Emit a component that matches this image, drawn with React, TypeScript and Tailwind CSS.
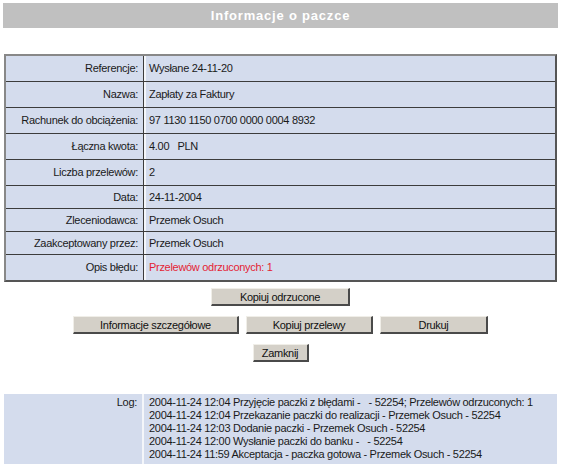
import React from "react";

const rows: { label: string; value: React.ReactNode; h: string }[] = [
  { label: "Referencje:", value: "Wysłane 24-11-20", h: "h-[26px]" },
  { label: "Nazwa:", value: "Zapłaty za Faktury", h: "h-[26px]" },
  { label: "Rachunek do obciążenia:", value: "97 1130 1150 0700 0000 0004 8932", h: "h-[26px]" },
  { label: "Łączna kwota:", value: <span className="whitespace-pre">4.00   PLN</span>, h: "h-[26px]" },
  { label: "Liczba przelewów:", value: "2", h: "h-[26px]" },
  { label: "Data:", value: "24-11-2004", h: "h-[23px]" },
  { label: "Zleceniodawca:", value: "Przemek Osuch", h: "h-[23px]" },
  { label: "Zaakceptowany przez:", value: "Przemek Osuch", h: "h-[23px]" },
  {
    label: "Opis błędu:",
    value: <span className="text-[#e41e34]">Przelewów odrzuconych: 1</span>,
    h: "h-[25px]",
  },
];

const logs = [
  "2004-11-24 12:04 Przyjęcie paczki z błędami -   - 52254; Przelewów odrzuconych: 1",
  "2004-11-24 12:04 Przekazanie paczki do realizacji - Przemek Osuch - 52254",
  "2004-11-24 12:03 Dodanie paczki - Przemek Osuch - 52254",
  "2004-11-24 12:00 Wysłanie paczki do banku -   - 52254",
  "2004-11-24 11:59 Akceptacja - paczka gotowa - Przemek Osuch - 52254",
];

function Btn({ children, w }: { children: React.ReactNode; w: string }) {
  return (
    <button
      className={`${w} h-[18px] bg-[#d4d0c8] border border-t-[#f0eee8] border-l-[#f0eee8] border-r-[#4a4a4a] border-b-[#4a4a4a] border-r-2 border-b-2 text-[11px] tracking-[-0.3px] leading-[14px] text-[#111] flex items-center justify-center`}
    >
      {children}
    </button>
  );
}

export default function App() {
  return (
    <div
      className="w-[565px] h-[469px] bg-white text-[11px] text-[#1a1a1a] pt-[3px]"
      style={{ fontFamily: '"Liberation Sans", Arial, sans-serif' }}
    >
      <div className="ml-[3px] w-[555px] h-[25px] bg-[#c0c0c0] flex items-center justify-center">
        <span className="text-white font-bold text-[13px] tracking-[0.8px]">Informacje o paczce</span>
      </div>

      <div className="ml-[4px] mt-[26px] w-[553px] border-2 border-t-[#888] border-l-[#888] border-r-[#555] border-b-[#555] bg-[#d4dced] tracking-[-0.3px]">
        {rows.map((r, i) => (
          <div
            key={i}
            className={`flex ${r.h} ${i < rows.length - 1 ? "border-b border-[#3c3c3c]" : ""}`}
          >
            <div className="w-[138px] flex items-center justify-end pr-[5px] border-r border-[#3c3c3c]">
              {r.label}
            </div>
            <div className="w-[2px] bg-[#f4f6fa]" />
            <div className="flex-1 flex items-center pl-[3px]">{r.value}</div>
          </div>
        ))}
      </div>

      <div className="ml-[4px] w-[553px] flex flex-col items-center gap-[10px] mt-[6px]">
        <Btn w="w-[139px]">Kopiuj odrzucone</Btn>
        <div className="flex gap-[7px]">
          <Btn w="w-[166px]">Informacje szczegółowe</Btn>
          <Btn w="w-[127px]">Kopiuj przelewy</Btn>
          <Btn w="w-[108px]">Drukuj</Btn>
        </div>
        <Btn w="w-[56px]">Zamknij</Btn>
      </div>

      <div className="ml-[4px] mt-[32px] w-[553px] h-[70px] bg-[#d4dced] flex tracking-[-0.3px]">
        <div className="w-[138px] text-right pr-[5px] pt-[2px] leading-[13px]">Log:</div>
        <div className="w-[2px] bg-[#f4f6fa]" />
        <div className="flex-1 pl-[5px] pt-[2px] leading-[13px]">
          {logs.map((l, i) => (
            <div key={i} className="whitespace-pre">
              {l}
            </div>
          ))}
        </div>
      </div>
    </div>
  );
}
